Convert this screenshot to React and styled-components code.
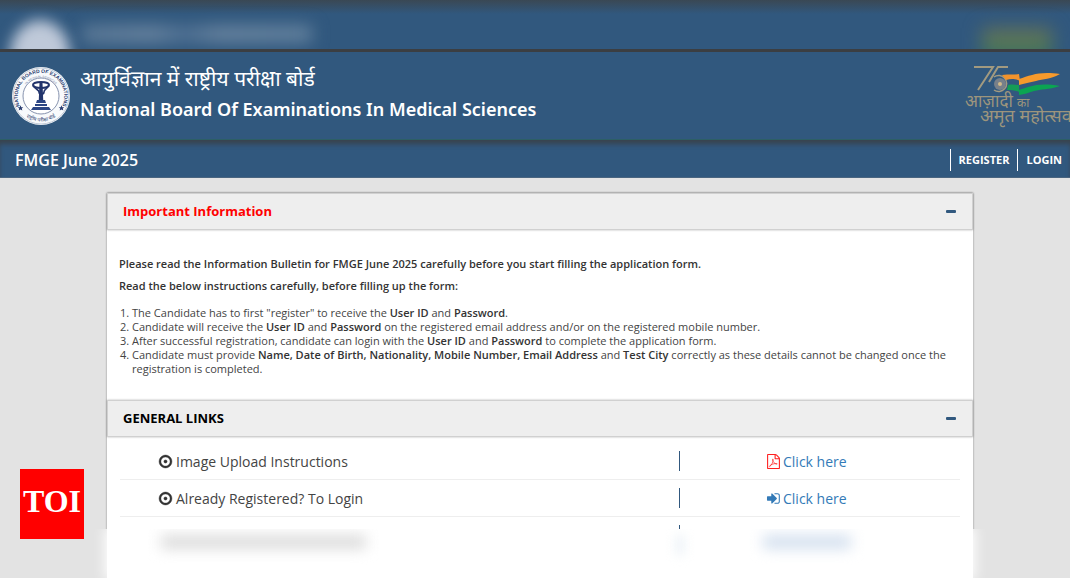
import { useState } from "react";
import styled, { createGlobalStyle } from "styled-components";

const links = [
  { label: "Image Upload Instructions", icon: "pdf" },
  { label: "Already Registered? To Login", icon: "signIn" },
];

function Emblem() {
  return (
    <EmblemSvg viewBox="0 0 58 58" role="img" aria-label="NBEMS emblem">
      <defs>
        <path id="outerArc" d="M8.8 40.7 A23.300 23.300 0 1 1 49.2 40.7" />
        <path id="innerArc" d="M11 24 A18.8 18.8 0 0 1 47 24" />
        <path id="lowerArc" d="M12.2 48.2 A25.5 25.5 0 0 0 45.8 48.2" />
      </defs>
      <circle cx="29" cy="29" r="29" fill="#f8fafc" />
      <circle cx="29" cy="29" r="28" fill="none" stroke="#c3cbd8" />
      <circle cx="29" cy="29" r="18" fill="#fff" stroke="#8793ae" />
      <g fill="#2a3c70" fontFamily="'Liberation Sans', sans-serif" textAnchor="middle">
        <text fontSize="5" fontWeight="700">
          <textPath href="#outerArc" startOffset="50%">
            NATIONAL BOARD OF EXAMINATIONS
          </textPath>
        </text>
        <text fontSize="3" fill="#7d8aa8">
          <textPath href="#innerArc" startOffset="50%">IN MEDICAL SCIENCES</textPath>
        </text>
        <text fontSize="5" fontFamily="'Noto Sans', sans-serif">
          <textPath href="#lowerArc" startOffset="50%">राष्ट्रीय परीक्षा बोर्ड</textPath>
        </text>
      </g>
      <path
        d="M8.5 38.3l.8 1.9 2 .1-1.5 1.3.5 2-1.8-1.1-1.8 1.1.5-2-1.5-1.3 2-.1zM49.5 38.3l.8 1.9 2 .1-1.5 1.3.5 2-1.8-1.1-1.8 1.1.5-2-1.5-1.3 2-.1z"
        fill="#2a3c70"
      />
      <ellipse cx="29" cy="18" rx="8" ry="3" fill="none" stroke="#22346c" strokeWidth="2" />
      <path
        d="M22 19C23 23 27 22 27 25C27 28 32 28 32 25C32 22 35 23 36 19"
        fill="none"
        stroke="#22346c"
        strokeWidth="1.6"
      />
      <path d="M27.500 16h3l.8 19h-4.600z" fill="#22346c" />
      <path d="M25 33h8l1 3H24zM23 37h12v2H23zM21 40h16l2 3H19z" fill="#2c4684" />
    </EmblemSvg>
  );
}

function AmritLogo() {
  return (
    <AmritSvg viewBox="0 0 106 64" role="img" aria-label="75 Azadi Ka Amrit Mahotsav">
      <g fill="none" stroke="#a29a80" strokeWidth="2">
        <path d="M10 3H29L14 26M44 3H34L25 18" />
        <path d="M30 26A8 8 0 1 0 30 13" strokeWidth="1.500" />
      </g>
      <circle cx="36" cy="20" r="6" fill="#77808a" />
      <circle cx="36" cy="20" r="2" fill="#d0b98a" />
      <path d="M38 11C45 10 50 11 55 10L56 17C50 14 46 15 42 16z" fill="#f2932c" />
      <path d="M55 15C67 11 76 7 96 10C87 15 79 15 72 17C66 18 60 20 55 21z" fill="#f79a2c" />
      <path d="M44 21C49 20 52 21 55 21L55 28C51 26 47 26 43 26z" fill="#159c57" />
      <path d="M55 26C65 23 73 18 96 22C84 26 77 25 70 27C64 29 61 30 55 31z" fill="#0ba552" />
      <g fill="#9d957d" fontFamily="'Noto Sans', sans-serif">
        <text x="1" y="43" fontSize="17">आज़ादी</text>
        <text x="53" y="43" fontSize="12">का</text>
        <text x="16" y="58" fontSize="18">अमृत महोत्सव</text>
      </g>
    </AmritSvg>
  );
}

function DotCircleIcon() {
  return (
    <Icon viewBox="0 0 1792 1792" aria-hidden="true">
      <path
        d="M1088 896q0 80-56 136t-136 56-136-56-56-136 56-136 136-56 136 56 56 136zm-192-544q-148 0-273 73t-198 198-73 273 73 273 198 198 273 73 273-73 198-198 73-273-73-273-198-198-273-73zm768 544q0 209-103 385.500t-279.500 279.500-385.500 103-385.500-103-279.500-279.500-103-385.500 103-385.500 279.500-279.500 385.500-103 385.500 103 279.500 279.500 103 385.500z"
        stroke="currentColor"
        strokeWidth="50"
      />
    </Icon>
  );
}

function PdfIcon() {
  return (
    <Icon viewBox="0 0 1792 1792" $color="#ff1f1f" aria-hidden="true">
      <path d="M1596 380q28 28 48 76t20 88v1152q0 40-28 68t-68 28h-1344q-40 0-68-28t-28-68v-1600q0-40 28-68t68-28h896q40 0 88 20t76 48zm-444-244v376h376q-10-29-22-41l-313-313q-12-12-41-22zm384 1528v-1024h-416q-40 0-68-28t-28-68v-416h-768v1536h1280z" />
      <path
        d="M440 1500C650 1370 860 960 850 640C850 560 770 580 790 690C840 960 1010 1160 1270 1210C1380 1230 1380 1140 1260 1140C1000 1130 640 1220 450 1400C380 1470 390 1520 440 1500"
        fill="none"
        stroke="currentColor"
        strokeWidth="80"
      />
    </Icon>
  );
}

function SignInIcon() {
  return (
    <Icon viewBox="0 0 1792 1792" $color="#337ab7" aria-hidden="true">
      <path d="M1301 896q0 26-19 45l-544 544q-19 19-45 19t-45-19-19-45v-288h-448q-26 0-45-19t-19-45v-384q0-26 19-45t45-19h448v-288q0-26 19-45t45-19 45 19l544 544q19 19 19 45zm352-352v704q0 119-84.500 203.500t-203.500 84.500h-320q-13 0-22.500-9.500t-9.500-22.500q0-4-1-20t-.5-26.500 3-23.500 10-19.500 20.500-6.500h320q66 0 113-47t47-113v-704q0-66-47-113t-113-47h-312l-11.500-1-11.500-3-8-5.500-7-9-2-13.500q0-4-1-20t-.5-26.500 3-23.500 10-19.500 20.500-6.500h320q119 0 203.500 84.500t84.500 203.500z" />
    </Icon>
  );
}

function Section({ title, color, children }) {
  const [isOpen, setIsOpen] = useState(true);

  return (
    <section>
      <SectionBar>
        <SectionTitle $color={color}>{title}</SectionTitle>
        <ToggleButton
          aria-label={`Toggle ${title}`}
          aria-expanded={isOpen}
          onClick={() => setIsOpen(!isOpen)}
        />
      </SectionBar>
      {isOpen && children}
    </section>
  );
}

function App() {
  return (
    <Page>
      <GlobalStyle />
      <TopHaze aria-hidden="true">
        <HazeDisc />
        <HazeText />
        <HazeFlag />
      </TopHaze>
      <Header>
        <Emblem />
        <Titles>
          <HindiTitle lang="hi">आयुर्विज्ञान में राष्ट्रीय परीक्षा बोर्ड</HindiTitle>
          <EnglishTitle>National Board Of Examinations In Medical Sciences</EnglishTitle>
        </Titles>
        <AmritLogo />
      </Header>
      <NavBar>
        <ExamName>FMGE June 2025</ExamName>
        <NavLink href="#register">REGISTER</NavLink>
        <NavLink href="#login">LOGIN</NavLink>
      </NavBar>
      <Main>
        <Panel>
          <Section title="Important Information" color="#ff0000">
            <Information>
              <Notice>
                Please read the Information Bulletin for FMGE June 2025 carefully before you
                start filling the application form.
              </Notice>
              <Notice>Read the below instructions carefully, before filling up the form:</Notice>
              <Instructions>
                <li>
                  The Candidate has to first "register" to receive the <b>User ID</b> and{" "}
                  <b>Password</b>.
                </li>
                <li>
                  Candidate will receive the <b>User ID</b> and <b>Password</b> on the registered
                  email address and/or on the registered mobile number.
                </li>
                <li>
                  After successful registration, candidate can login with the <b>User ID</b> and{" "}
                  <b>Password</b> to complete the application form.
                </li>
                <li>
                  Candidate must provide{" "}
                  <b>Name, Date of Birth, Nationality, Mobile Number, Email Address</b> and{" "}
                  <b>Test City</b> correctly as these details cannot be changed once the
                  registration is completed.
                </li>
              </Instructions>
            </Information>
          </Section>
          <Section title="GENERAL LINKS" color="#000">
            <LinkList>
              {links.map(({ label, icon }) => (
                <LinkRow key={label}>
                  <LinkLabel>
                    <DotCircleIcon />
                    {label}
                  </LinkLabel>
                  <LinkAction href="#open" aria-label={`Click here: ${label}`}>
                    {icon === "pdf" ? <PdfIcon /> : <SignInIcon />}
                    Click here
                  </LinkAction>
                </LinkRow>
              ))}
              <LinkRow>
                <LinkLabel />
              </LinkRow>
            </LinkList>
          </Section>
        </Panel>
      </Main>
      <BottomHaze aria-hidden="true">
        <HazeSheet>
          <HazeLabel />
          <HazeDivider />
          <HazeLink />
        </HazeSheet>
      </BottomHaze>
      <Badge>TOI</Badge>
    </Page>
  );
}

const GlobalStyle = createGlobalStyle`
  * {
    box-sizing: border-box;
  }

  body {
    margin: 0;
    background: #e3e3e3;
    font-family: "Open Sans", "Noto Sans", sans-serif;
  }
`;

const Page = styled.div`
  position: relative;
  display: flex;
  flex-direction: column;
  height: 100vh;
  overflow: hidden;
`;

const TopHaze = styled.div`
  display: flex;
  flex: none;
  align-items: flex-start;
  height: 49px;
  padding: 0 10px;
  overflow: hidden;
  background: linear-gradient(#3a4854, #31587e 14px);
`;

const HazeDisc = styled.div`
  flex: none;
  width: 60px;
  height: 70px;
  margin-top: 20px;
  border-radius: 50%;
  background: #bfc9d9;
  filter: blur(7px);
`;

const HazeText = styled.div`
  width: 230px;
  height: 18px;
  margin: 25px auto 0 12px;
  background: linear-gradient(90deg, #5a7896, #66829e 30%, #4d6f92 45%, #66829e 60%, #607f9c);
  filter: blur(8px);
`;

const HazeFlag = styled.div`
  width: 70px;
  height: 30px;
  margin: 28px 8px 0 0;
  background: linear-gradient(#6c7058, #3c7a58);
  filter: blur(9px);
`;

const Header = styled.header`
  display: flex;
  flex: none;
  align-items: center;
  height: 91px;
  padding-left: 12px;
  border-top: 3px solid #3b3e42;
  border-bottom: 1px solid #2c5f66;
  background: #31587e;
`;

const EmblemSvg = styled.svg`
  flex: none;
  width: 58px;
  height: 58px;
`;

const Titles = styled.div`
  flex: 1;
  margin-left: 10px;
  padding-bottom: 4px;
  color: #fff;
`;

const HindiTitle = styled.div`
  font-size: 21px;
  line-height: 30px;
`;

const EnglishTitle = styled.h1`
  margin: 0;
  font-family: "Noto Sans", sans-serif;
  font-size: 18px;
  font-weight: 600;
  line-height: 32px;
`;

const AmritSvg = styled.svg`
  flex: none;
  width: 106px;
  height: 64px;
`;

const NavBar = styled.nav`
  display: flex;
  flex: none;
  align-items: center;
  height: 38px;
  padding-top: 2px;
  padding-left: 15px;
  border-bottom: 1px solid #4a6580;
  background: #31587e;
  box-shadow: inset 0 5px 5px -1px #39434d;
`;

const ExamName = styled.h2`
  flex: 1;
  margin: 0;
  color: #fff;
  font-size: 16px;
  font-weight: 600;
`;

const NavLink = styled.a`
  padding: 0 8px;
  border-left: 1px solid #fff;
  color: #fff;
  font-size: 11px;
  font-weight: 700;
  line-height: 22px;
  text-decoration: none;
`;

const Main = styled.main`
  flex: 1;
  min-height: 0;
  padding: 15px 97px 0 107px;
  overflow: hidden;
`;

const Panel = styled.div`
  min-height: 100%;
  background: #fff;
  box-shadow: 0 0 2px rgba(0, 0, 0, 0.4);
`;

const SectionBar = styled.div`
  display: flex;
  align-items: center;
  justify-content: space-between;
  height: 37px;
  padding: 0 16px 1px 15px;
  border: 1px solid #d0d0d0;
  background: #eee;
  box-shadow: 0 0 2px rgba(0, 0, 0, 0.3);
`;

const SectionTitle = styled.h3`
  margin: 0;
  color: ${({ $color }) => $color};
  font-size: 13px;
  font-weight: 700;
`;

const ToggleButton = styled.button`
  width: 10px;
  height: 3px;
  padding: 0;
  border: 0;
  border-radius: 1px;
  background: #31587e;
  cursor: pointer;
`;

const Information = styled.div`
  padding: 26px 12px 24px;
`;

const Notice = styled.p`
  margin: 0 0 6px;
  color: #333;
  font-size: 11px;
  font-weight: 600;
  line-height: 16px;
`;

const Instructions = styled.ol`
  margin: 12px 0 0;
  padding-left: 13px;
  color: #444;
  font-size: 11px;
  line-height: 14px;

  b {
    color: #333;
    font-weight: 600;
  }
`;

const LinkList = styled.ul`
  margin: 0;
  padding: 6px 13px 0;
  list-style: none;
`;

const LinkRow = styled.li`
  display: grid;
  grid-template-columns: 2fr 1fr;
  align-items: center;
  height: 37px;
  border-bottom: 1px solid #eee;
  font-size: 14px;
`;

const LinkLabel = styled.span`
  display: flex;
  align-items: center;
  gap: 3px;
  height: 20px;
  padding-left: 38px;
  border-right: 1px solid #31587e;
  color: #444;
`;

const LinkAction = styled.a`
  display: flex;
  align-items: center;
  gap: 2px;
  padding-left: 86px;
  color: #337ab7;
  text-decoration: none;
`;

const Icon = styled.svg`
  flex: none;
  width: 15px;
  height: 15px;
  color: ${({ $color }) => $color || "#333"};
  fill: currentColor;
`;

const BottomHaze = styled.div`
  flex: none;
  height: 49px;
  padding: 0 97px 0 107px;
  overflow: hidden;
  background: #e3e3e3;
`;

const HazeSheet = styled.div`
  display: flex;
  align-items: flex-start;
  height: 49px;
  padding: 6px 122px 0 54px;
  background: #fff;
  box-shadow: 0 0 12px 2px #fff;
`;

const HazeLabel = styled.div`
  width: 205px;
  height: 14px;
  background: #dcdcdc;
  filter: blur(7px);
`;

const HazeDivider = styled.div`
  width: 6px;
  height: 20px;
  margin: 0 80px 0 auto;
  background: #e4ecf4;
  filter: blur(6px);
`;

const HazeLink = styled.div`
  width: 88px;
  height: 14px;
  background: #d4e0ef;
  filter: blur(7px);
`;

const Badge = styled.div`
  position: absolute;
  bottom: 39px;
  left: 20px;
  width: 64px;
  height: 70px;
  background: #f00;
  color: #fff;
  font-family: "Liberation Serif", serif;
  font-size: 32px;
  font-weight: 700;
  line-height: 64px;
  text-align: center;
`;

export default App;
